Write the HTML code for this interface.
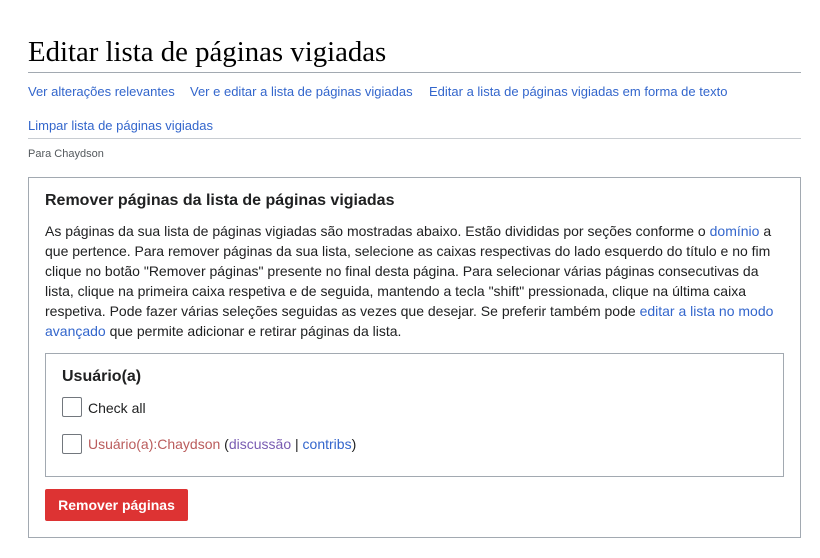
<!DOCTYPE html>
<html><head><meta charset="utf-8"><style>
*{margin:0;padding:0;box-sizing:border-box}
body{width:820px;height:558px;background:#fff;font-family:"Liberation Sans",sans-serif;color:#202122;position:relative;overflow:hidden}
.a{position:absolute;white-space:nowrap}
a{color:#3366cc;text-decoration:none}
h1{position:absolute;left:28px;top:34px;font-family:"Liberation Serif",serif;font-weight:normal;font-size:28.8px;color:#000;line-height:36px}
.hr{position:absolute;left:28px;width:773px;height:1px;background:#a2a9b1}
.links{font-size:13px}
.box{position:absolute;left:28px;top:177px;width:773px;height:361px;border:1px solid #a2a9b1}
.inner{position:absolute;left:45px;top:353px;width:739px;height:124px;border:1px solid #a2a9b1}
.cb{position:absolute;width:20px;height:20px;border:1px solid #72777d;border-radius:2px;background:#fff}
p{position:absolute;left:45px;top:221px;width:740px;font-size:14px;line-height:20px}
.btn{position:absolute;left:45px;top:489px;width:143px;height:32px;background:#dd3333;border-radius:2px;color:#fff;font-weight:bold;font-size:14px;text-align:center;line-height:32px}
</style></head><body>
<h1>Editar lista de páginas vigiadas</h1>
<div class="hr" style="top:72px"></div>
<div class="a links" style="left:28px;top:84px"><a>Ver alterações relevantes</a></div>
<div class="a links" style="left:190px;top:84px"><a>Ver e editar a lista de páginas vigiadas</a></div>
<div class="a links" style="left:429px;top:84px"><a>Editar a lista de páginas vigiadas em forma de texto</a></div>
<div class="a links" style="left:28px;top:118px"><a>Limpar lista de páginas vigiadas</a></div>
<div class="hr" style="top:138px;background:#c8ccd1"></div>
<div class="a" style="left:28px;top:148px;font-size:11px;color:#54595d">Para Chaydson</div>
<div class="box"></div>
<div class="a" style="left:45px;top:192px;font-size:16px;font-weight:bold">Remover páginas da lista de páginas vigiadas</div>
<p>As páginas da sua lista de páginas vigiadas são mostradas abaixo. Estão divididas por seções conforme o <a>domínio</a> a que pertence. Para remover páginas da sua lista, selecione as caixas respectivas do lado esquerdo do título e no fim clique no botão "Remover páginas" presente no final desta página. Para selecionar várias páginas consecutivas da lista, clique na primeira caixa respetiva e de seguida, mantendo a tecla "shift" pressionada, clique na última caixa respetiva. Pode fazer várias seleções seguidas as vezes que desejar. Se preferir também pode <a>editar a lista no modo avançado</a> que permite adicionar e retirar páginas da lista.</p>
<div class="inner"></div>
<div class="a" style="left:62px;top:368px;font-size:16px;font-weight:bold">Usuário(a)</div>
<div class="cb" style="left:62px;top:397px"></div>
<div class="a" style="left:88px;top:400px;font-size:14px">Check all</div>
<div class="cb" style="left:62px;top:434px"></div>
<div class="a" style="left:88px;top:436px;font-size:14px"><a style="color:#ba5c5c">Usuário(a):Chaydson</a> (<a style="color:#795cb2">discussão</a> | <a>contribs</a>)</div>
<div class="btn">Remover páginas</div>
</body></html>
